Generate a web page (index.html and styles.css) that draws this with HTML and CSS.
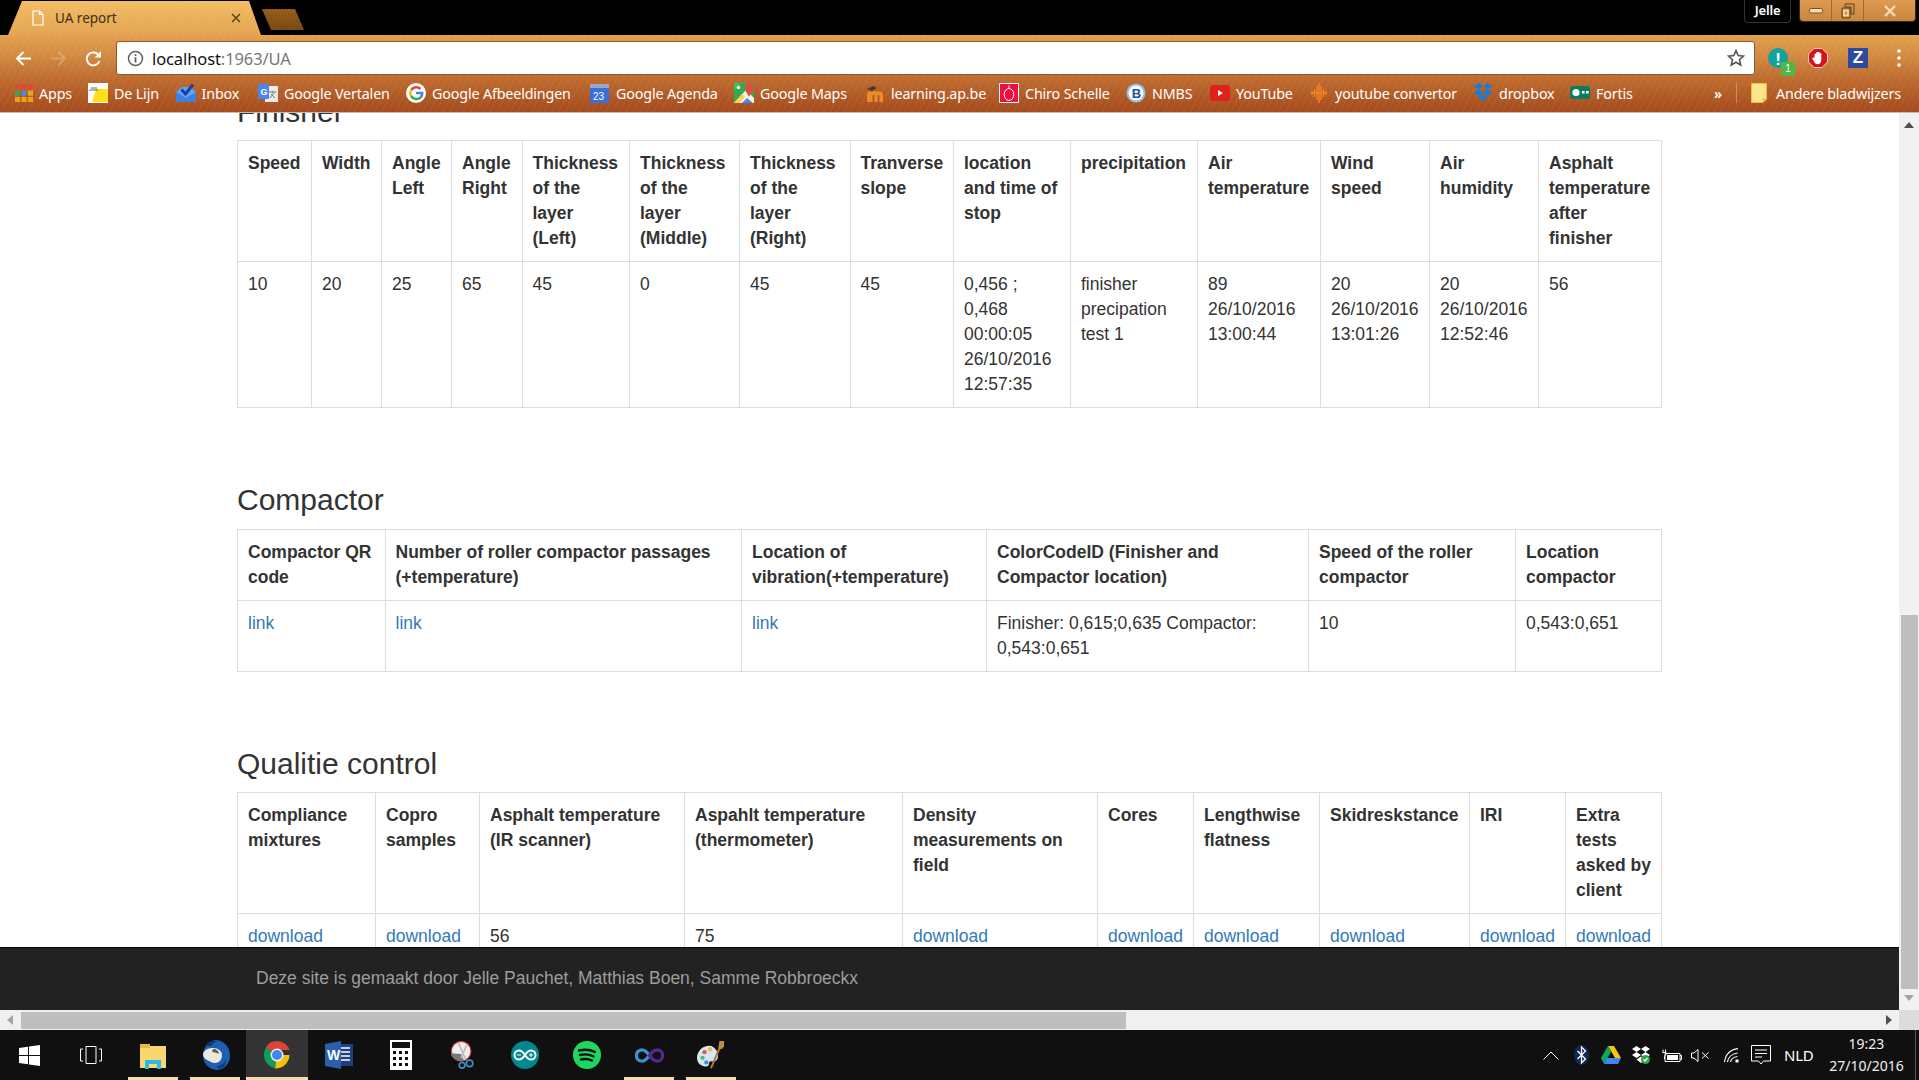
FILE: index.html
```html
<!DOCTYPE html>
<html lang="nl">
<head>
<meta charset="utf-8">
<title>UA report</title>
<link rel="stylesheet" href="styles.css">
</head>
<body>
<header class="browser">
  <div class="tabstrip">
    <div class="tab">
      <svg class="tab-doc" viewBox="0 0 12 16"><path d="M1 1h6.500L11 4.500V15H1z M7.500 1v3.500H11" fill="none" stroke="#fff" stroke-width="1.200"/></svg>
      <span class="tab-title">UA report</span>
      <svg class="tab-x" viewBox="0 0 10 10"><path d="M1 1l8 8M9 1l-8 8" stroke="#4a3a20" stroke-width="1.300"/></svg>
    </div>
    <div class="newtab"></div>
    <div class="profile">Jelle</div>
    <div class="winbtns">
      <div class="winbtn win-min"><svg viewBox="0 0 14 8" class="win-ico"><rect x="0.500" y="1.500" width="13" height="4.500" rx="1.500" fill="#f5dcb4" stroke="#7a5228"/></svg></div>
      <div class="winbtn win-max"><svg viewBox="0 0 14 16" class="win-ico win-ico-tall"><path d="M4 1h9v10h-3V4H4z M1 5h8v10H1z" fill="none" stroke="#5d4020" stroke-width="1"/><path d="M3 7.500h4v5H3z" fill="none" stroke="#f5dcb4" stroke-width="1.600"/></svg></div>
      <div class="winbtn win-close"><svg viewBox="0 0 14 12" class="win-ico"><path d="M2 1l10 10M12 1L2 11" stroke="#f5dcb4" stroke-width="2.400"/></svg></div>
    </div>
  </div>
  <div class="bars">
    <div class="toolbar">
      <svg class="nav" viewBox="0 0 17 17"><path d="M16 8.500H2M8.500 2L2 8.500 8.500 15" fill="none" stroke="#fff" stroke-width="1.800"/></svg>
      <svg class="nav nav-off" viewBox="0 0 17 17"><path d="M1 8.500h14M8.500 2L15 8.500 8.500 15" fill="none" stroke="#fff" stroke-width="1.800"/></svg>
      <svg class="nav" viewBox="0 0 17 17"><path d="M14.500 11a6.500 6.500 0 1 1-.6-5.500" fill="none" stroke="#fff" stroke-width="1.900"/><path d="M16 1v6.500H9.500z" fill="#fff"/></svg>
      <div class="omnibox">
        <svg class="info" viewBox="0 0 17 17"><circle cx="8.500" cy="8.500" r="7" fill="none" stroke="#5f5f5f" stroke-width="1.500"/><path d="M7.600 7.300h1.800v5.200H7.600zM7.600 4.200h1.800V6H7.600z" fill="#5f5f5f"/></svg>
        <span class="url">localhost<span class="url-dim">:1963/UA</span></span>
        <svg class="star" viewBox="0 0 18 18"><path d="M9 1.600l2.200 5 5.300.5-4 3.600 1.200 5.300L9 13.200 4.300 16l1.200-5.300-4-3.600 5.300-.5z" fill="none" stroke="#555" stroke-width="1.600"/></svg>
      </div>
      <div class="exts">
        <div class="ext ext-note"><span class="ext-bang">!</span><span class="ext-badge">1</span></div>
        <svg class="ext" viewBox="0 0 20 20"><path d="M6 .5h8L19.500 6v8L14 19.500H6L.5 14V6z" fill="#d8111c" stroke="#f3d5c8"/><path d="M6.500 10V6.200a.9.9 0 0 1 1.700 0V4.600a.9.9 0 0 1 1.700 0v-.3a.9.9 0 0 1 1.700 0v1.200a.9.9 0 0 1 1.700 0V12c0 2.500-1.500 4.200-3.700 4.200-1.800 0-2.700-1-3.500-2.500L4.400 10.800c-.5-1 .8-1.800 1.500-1z" fill="#fff"/></svg>
        <div class="ext ext-z">Z</div>
        <svg class="dots" viewBox="0 0 4 18"><circle cx="2" cy="2" r="1.800" fill="#fff"/><circle cx="2" cy="9" r="1.800" fill="#fff"/><circle cx="2" cy="16" r="1.800" fill="#fff"/></svg>
      </div>
    </div>
    <nav class="bookmarks">
      <div class="bm-list">
        <a class="bm"><svg class="bm-ico bm-ico-apps" viewBox="2 2 16 16"><g fill="#e2483a"><rect x="2" y="2" width="4.500" height="4.500"/><rect x="7.800" y="2" width="4.500" height="4.500"/><rect x="13.500" y="2" width="4.500" height="4.500"/></g><rect x="2" y="7.800" width="4.500" height="4.500" fill="#3aa757"/><rect x="7.800" y="7.800" width="4.500" height="4.500" fill="#4a8be8"/><rect x="13.500" y="7.800" width="4.500" height="4.500" fill="#e8a81f"/><g fill="#eaa21b"><rect x="2" y="13.500" width="4.500" height="4.500"/><rect x="7.800" y="13.500" width="4.500" height="4.500"/><rect x="13.500" y="13.500" width="4.500" height="4.500"/></g></svg><span>Apps</span></a>
        <a class="bm"><svg class="bm-ico" viewBox="0 0 20 20"><rect width="20" height="20" fill="#fff"/><path d="M8 6h12v13H4z" fill="#ffdf1a"/><path d="M1 7h9M3 5h6" stroke="#666" stroke-width="1"/></svg><span>De Lijn</span></a>
        <a class="bm"><svg class="bm-ico" viewBox="0 0 20 20"><path d="M0 9l6-5h8l6 5v10H0z" fill="#5fa4ee"/><path d="M0 9l10 6 10-6v10H0z" fill="#3f7fe0"/><path d="M5.500 6.500L9.500 11 17 1.500" fill="none" stroke="#1a3f9e" stroke-width="3"/></svg><span>Inbox</span></a>
        <a class="bm"><svg class="bm-ico" viewBox="0 0 20 20"><rect x="7" y="3" width="13" height="16" fill="#e9e9e9"/><path d="M11 9h7M14.500 8v1.500M12 15l4-5M13 11l4 4" stroke="#777" stroke-width="1"/><rect x="0" y="1" width="11" height="15" rx="1" fill="#4a85ee"/><text class="svg-g" x="2.500" y="11.500">G</text></svg><span>Google Vertalen</span></a>
        <a class="bm"><svg class="bm-ico" viewBox="0 0 20 20"><circle cx="10" cy="10" r="10" fill="#fff"/><path d="M14.500 6a6.200 6.200 0 0 0-9.400 1" fill="none" stroke="#ea4335" stroke-width="2.500"/><path d="M5.100 7a6.200 6.200 0 0 0 0 6" fill="none" stroke="#fbbc05" stroke-width="2.500"/><path d="M5.100 13a6.200 6.200 0 0 0 9.800 1.200" fill="none" stroke="#34a853" stroke-width="2.500"/><path d="M14.900 14.200A6.200 6.200 0 0 0 16.200 10H10" fill="none" stroke="#4285f4" stroke-width="2.500"/></svg><span>Google Afbeeldingen</span></a>
        <a class="bm"><svg class="bm-ico" viewBox="0 0 20 20"><rect y="1" width="19" height="19" fill="#3b6fd8"/><rect y="1" width="19" height="4" fill="#9aa8c4"/><text class="svg-cal" x="3" y="16.500">23</text></svg><span>Google Agenda</span></a>
        <a class="bm"><svg class="bm-ico" viewBox="0 0 20 20"><rect width="20" height="20" fill="#35a853"/><path d="M0 20L12 7l8 8v5z" fill="#f5f3ec"/><path d="M0 20l8-9 3 3-6 6z" fill="#fbd34a"/><path d="M8 20l5-5 6 5z" fill="#4a86ea"/><path d="M0 0h6v6H0z" fill="#3ac06a"/><path d="M15 0a5 5 0 0 1 5 5c0 3-3 5-5 9-2-4-4-6-4-9a5 5 0 0 1 4-5z" fill="#e14b3c"/><circle cx="4.500" cy="4.500" r="1.800" fill="#dff3e0"/></svg><span>Google Maps</span></a>
        <a class="bm"><svg class="bm-ico" viewBox="0 0 20 20"><path d="M2 19v-8a3 3 0 0 1 5-2 3 3 0 0 1 4 0c2-1.500 7-1 7 3v7h-3.500v-7h-2v7h-3v-7h-2v7z" fill="#ee8b24"/><path d="M2 6l6-3 4 2-5 3z" fill="#3d3a38"/></svg><span>learning.ap.be</span></a>
        <a class="bm"><svg class="bm-ico" viewBox="0 0 20 20"><rect width="20" height="20" fill="#ed0f42"/><path d="M.5.500h19v19H.5z" fill="none" stroke="#fff"/><ellipse cx="10" cy="11.500" rx="4.800" ry="6" fill="none" stroke="#fff" stroke-width="1"/><path d="M10 5V2.500" stroke="#fff"/></svg><span>Chiro Schelle</span></a>
        <a class="bm"><svg class="bm-ico" viewBox="0 0 20 20"><circle cx="10" cy="10" r="9.500" fill="#8fc0ea"/><circle cx="10" cy="10" r="7.500" fill="#fff"/><text class="svg-b" x="5.800" y="15">B</text></svg><span>NMBS</span></a>
        <a class="bm"><svg class="bm-ico" viewBox="0 0 20 20"><rect y="2" width="20" height="16" rx="3" fill="#e0201c"/><path d="M8 7l5 3-5 3z" fill="#fff"/></svg><span>YouTube</span></a>
        <a class="bm"><svg class="bm-ico bm-ico-wave" viewBox="0 0 16 20"><path d="M1 8v4M3.500 6v8M6 3v14M8 0v20M10 3v14M12.500 6v8M15 8v4M0 10h16" stroke="#ee8322" stroke-width="1.500"/></svg><span>youtube convertor</span></a>
        <a class="bm"><svg class="bm-ico" viewBox="0 0 20 20"><g fill="#0a7fe8"><path d="M5.500 0L10 3.300 5.500 6.500 1 3.300z"/><path d="M14.500 0L19 3.300l-4.500 3.200L10 3.300z"/><path d="M5.500 6.500L10 9.800 5.500 13 1 9.800z"/><path d="M14.500 6.500L19 9.800 14.500 13 10 9.800z"/><path d="M10 11.500l4.500 3.300L10 18l-4.500-3.200z"/></g></svg><span>dropbox</span></a>
        <a class="bm"><svg class="bm-ico" viewBox="0 0 20 20"><rect y="3" width="20" height="13" rx="2.500" fill="#0d7a62"/><circle cx="6" cy="9.500" r="3.600" fill="#fff"/><rect x="12" y="8" width="2.600" height="2.600" fill="#fff"/><rect x="16" y="8" width="2.600" height="2.600" fill="#fff"/></svg><span>Fortis</span></a>
      </div>
      <div class="bm-right">
        <span class="bm-more">»</span>
        <span class="bm-sep"></span>
        <a class="bm bm-other"><svg class="bm-ico bm-ico-folder" viewBox="0 0 16 20"><path d="M.5.500h15v15.500L12 19.500H.5z" fill="#fde68a" stroke="#e8c04a"/><path d="M15 15h-3.500v4" fill="#e8c04a"/></svg><span>Andere bladwijzers</span></a>
      </div>
    </nav>
  </div>
</header>

<div class="window">
  <main class="page">
    <div class="sheet">
      <section class="block">
        <h3>Finisher</h3>
        <table class="grid t-finisher">
          <colgroup><col><col><col><col><col><col><col><col><col><col><col><col><col><col></colgroup>
          <thead><tr><th>Speed</th><th>Width</th><th>Angle Left</th><th>Angle Right</th><th>Thickness of the layer (Left)</th><th>Thickness of the layer (Middle)</th><th>Thickness of the layer (Right)</th><th>Tranverse slope</th><th>location and time of stop</th><th>precipitation</th><th>Air temperature</th><th>Wind speed</th><th>Air humidity</th><th>Asphalt temperature after finisher</th></tr></thead>
          <tbody><tr><td>10</td><td>20</td><td>25</td><td>65</td><td>45</td><td>0</td><td>45</td><td>45</td><td>0,456 ; 0,468 00:00:05 26/10/2016 12:57:35</td><td>finisher precipation test 1</td><td>89 26/10/2016 13:00:44</td><td>20 26/10/2016 13:01:26</td><td>20 26/10/2016 12:52:46</td><td>56</td></tr></tbody>
        </table>
      </section>
      <section class="block block-compactor">
        <h3>Compactor</h3>
        <table class="grid t-compactor">
          <colgroup><col><col><col><col><col><col></colgroup>
          <thead><tr><th>Compactor QR code</th><th>Number of roller compactor passages (+temperature)</th><th>Location of vibration(+temperature)</th><th>ColorCodeID (Finisher and Compactor location)</th><th>Speed of the roller compactor</th><th>Location compactor</th></tr></thead>
          <tbody><tr><td><a href="#">link</a></td><td><a href="#">link</a></td><td><a href="#">link</a></td><td>Finisher: 0,615;0,635 Compactor: 0,543:0,651</td><td>10</td><td>0,543:0,651</td></tr></tbody>
        </table>
      </section>
      <section class="block block-quality">
        <h3>Qualitie control</h3>
        <table class="grid t-quality">
          <colgroup><col><col><col><col><col><col><col><col><col><col></colgroup>
          <thead><tr><th>Compliance mixtures</th><th>Copro samples</th><th>Asphalt temperature (IR scanner)</th><th>Aspahlt temperature (thermometer)</th><th>Density measurements on field</th><th>Cores</th><th>Lengthwise flatness</th><th>Skidreskstance</th><th>IRI</th><th>Extra tests asked by client</th></tr></thead>
          <tbody><tr><td><a href="#">download</a></td><td><a href="#">download</a></td><td>56</td><td>75</td><td><a href="#">download</a></td><td><a href="#">download</a></td><td><a href="#">download</a></td><td><a href="#">download</a></td><td><a href="#">download</a></td><td><a href="#">download</a></td></tr></tbody>
        </table>
      </section>
    </div>
  </main>
  <footer class="site-footer">Deze site is gemaakt door Jelle Pauchet, Matthias Boen, Samme Robbroeckx</footer>
  <div class="vscroll">
    <span class="arrow arrow-up"></span>
    <span class="vthumb"></span>
    <span class="arrow arrow-down"></span>
  </div>
  <div class="hscroll">
    <span class="harrow harrow-left"></span>
    <span class="hthumb"></span>
    <span class="harrow harrow-right"></span>
  </div>
  <div class="corner"></div>
</div>

<div class="taskbar">
  <div class="task task-first">
    <svg class="task-ico task-win" viewBox="0 0 21 21"><path d="M0 3l9-1.300V10H0zM10 1.500L21 0v10H10zM0 11h9v8.300L0 18zM10 11h11v10l-11-1.500z" fill="#fff"/></svg>
  </div>
  <div class="task">
    <svg class="task-ico task-view" viewBox="0 0 24 18"><path d="M7 .5h10v17H7zM4 3H1.500v12H4M20 3h2.500v12H20" fill="none" stroke="#fff" stroke-width="1"/></svg>
  </div>
  <div class="task task-on">
    <svg class="task-ico" viewBox="0 0 28 28"><path d="M1 3h8l2 2h16v22H1z" fill="#f9d76f"/><path d="M1 3h10v4H1z" fill="#e8b93f"/><path d="M6 28v-9h16v9h-4v-5h-8v5z" fill="#2db8ec"/></svg>
  </div>
  <div class="task task-on">
    <svg class="task-ico task-bird" viewBox="0 0 29 30"><path d="M14 0c8 0 15 6 15 16 0 7-5 13-12 14-8 0-15-6-15-14C2 8 7 1 14 0z" fill="#1d5fb0"/><path d="M4 6c3-4 7-6 12-5-3 1-5 3-6 5z" fill="#0d3570"/><path d="M2 14c1-4 5-6 10-6 5 0 9 3 9 7 0 5-3 8-7 8-3 0-5-2-8-3-2-1-4-3-4-6z" fill="#ece7df"/><path d="M12 9c3 0 6 2 6 5-2-1-4-2-7-2z" fill="#5a5a5a"/><path d="M16 26c4 0 8-3 9-7 1 5-3 10-8 10z" fill="#0d3f82"/></svg>
  </div>
  <div class="task task-on task-active">
    <svg class="task-ico" viewBox="0 0 28 28"><path d="M14 14L3 6.500A13 13 0 0 1 26.500 9H14z" fill="#db4437"/><path d="M14 14l-11-7.500A14 14 0 0 0 12 27.500z" fill="#0f9d58"/><path d="M14 14h12.500A14 14 0 0 1 12 27.500z" fill="#f4c20d"/><circle cx="14" cy="14" r="6.500" fill="#f1f1f1"/><circle cx="14" cy="14" r="5" fill="#4285f4"/></svg>
  </div>
  <div class="task">
    <svg class="task-ico" viewBox="0 0 28 28"><path d="M10 3h18v22H10z" fill="#1f3f7e"/><path d="M14 7h11M14 11h11M14 15h11M14 19h11" stroke="#fff" stroke-width="1.500"/><path d="M0 3l16-3v28L0 25z" fill="#2b5fad"/><text class="svg-w" x="2" y="19">W</text></svg>
  </div>
  <div class="task">
    <svg class="task-ico task-calc" viewBox="0 0 22 30"><rect width="22" height="30" fill="#fff"/><rect x="2" y="2" width="18" height="6" fill="#111"/><g fill="#111"><path d="M3 11h3v3H3zM9 11h3v3H9zM15 11h3v3h-3zM3 17h3v3H3zM9 17h3v3H9zM15 17h3v3h-3zM3 23h3v3H3zM9 23h3v3H9zM15 23h3v3h-3z"/></g></svg>
  </div>
  <div class="task">
    <svg class="task-ico" viewBox="0 0 28 30"><circle cx="12" cy="11" r="10.500" fill="#eee" stroke="#c93a3a" stroke-width="1.200"/><path d="M1 13a11 9 0 0 0 14 8l-3-7z" fill="#777"/><path d="M9 2l8 18M18 4l-6 14" stroke="#bdbdbd" stroke-width="1.800"/><circle cx="21" cy="24" r="3.500" fill="none" stroke="#3c8fc9" stroke-width="1.800"/><circle cx="13" cy="26" r="3" fill="none" stroke="#3c8fc9" stroke-width="1.800"/></svg>
  </div>
  <div class="task">
    <svg class="task-ico" viewBox="0 0 28 28"><circle cx="14" cy="14" r="14" fill="#00878f"/><path d="M14 14c-2-3-3.500-4.500-6-4.500a4.500 4.500 0 0 0 0 9c2.500 0 4-1.500 6-4.500zm0 0c2-3 3.500-4.500 6-4.500a4.500 4.500 0 0 1 0 9c-2.500 0-4-1.500-6-4.500z" fill="none" stroke="#fff" stroke-width="2"/><path d="M6 14h4M18 14h4M20 12v4" stroke="#fff" stroke-width="1"/></svg>
  </div>
  <div class="task">
    <svg class="task-ico" viewBox="0 0 28 28"><circle cx="14" cy="14" r="14" fill="#1ed760"/><path d="M6 9.500c6-1.500 11-1 16 1.500M7 14c5-1.200 9-.8 13.500 1.300M8 18.500c4-1 7.500-.6 11 1" fill="none" stroke="#111" stroke-width="2.400" stroke-linecap="round"/></svg>
  </div>
  <div class="task task-on">
    <svg class="task-ico task-vs" viewBox="0 0 30 16"><path d="M15 8C12 4 10 2 7 2a6 6 0 0 0 0 12c3 0 5-2 8-6z" fill="none" stroke="#3e8fcb" stroke-width="3.600"/><path d="M15 8c3-4 5-6 8-6a6 6 0 0 1 0 12c-3 0-5-2-8-6z" fill="none" stroke="#4f2a8f" stroke-width="3.600"/></svg>
  </div>
  <div class="task task-on">
    <svg class="task-ico" viewBox="0 0 30 30"><path d="M13 5C6 5 0 11 0 18s6 10 11 9c3-1 1-4 3-5s6 1 8-3c2-5-2-14-9-14z" fill="#d7e5ef"/><circle cx="8" cy="12" r="2.300" fill="#e2574c"/><circle cx="14" cy="9" r="2.300" fill="#efb93a"/><circle cx="6" cy="18" r="2.300" fill="#5ab56e"/><circle cx="10" cy="23" r="2.300" fill="#3d8fe0"/><path d="M27 1L15 29" stroke="#b5773a" stroke-width="2.200"/><path d="M24 0h5v6l-3 3-3-2z" fill="#c08a4a"/></svg>
  </div>
  <div class="tray">
    <svg class="tray-chev" viewBox="0 0 16 9"><path d="M.5 8.500L8 1l7.500 7.500" fill="none" stroke="#fff" stroke-width="1"/></svg>
    <svg class="tray-bt" viewBox="0 0 15 20"><ellipse cx="7.500" cy="10" rx="7.500" ry="10" fill="#0b2a55"/><path d="M3.500 6l8 8L7.500 18V2l4 4-8 8" fill="none" stroke="#fff" stroke-width="1.300"/></svg>
    <svg class="tray-drive" viewBox="0 0 20 18"><path d="M7 0h6l7 12h-6z" fill="#f5c518"/><path d="M7 0L0 12l3 6L10 6z" fill="#0da960"/><path d="M6 12h14l-3 6H3z" fill="#4285f4"/></svg>
    <svg class="tray-box" viewBox="0 0 19 18"><g fill="#fff"><path d="M4.500 0L9 3 4.500 6 0 3zM13.500 0L18 3l-4.500 3L9 3zM4.500 6L9 9l-4.500 3L0 9zM13.500 6L18 9l-4.500 3L9 9zM9 10.500l4.500 3L9 17l-4.500-3.500z"/></g><circle cx="13.500" cy="13.500" r="4.500" fill="#2ea64a"/><path d="M11.500 13.500l1.500 1.500 2.500-3" fill="none" stroke="#fff" stroke-width="1.200"/></svg>
    <svg class="tray-batt" viewBox="0 0 20 13"><path d="M3 4.500h15v8H3zM18 6.500h1.500v4H18" fill="none" stroke="#fff"/><rect x="5" y="6" width="11" height="5" fill="#fff"/><path d="M1 .5v3M3.500.5v3M.5 3.500h3.500v2L2.500 7.500V10" fill="none" stroke="#fff"/></svg>
    <svg class="tray-spk" viewBox="0 0 19 13"><path d="M.5 4h2.500L7 .5v12L3 9H.5zM11 3.500l6.500 6M17.500 3.500l-6.500 6" fill="none" stroke="#fff" stroke-width="1"/></svg>
    <svg class="tray-wifi" viewBox="0 0 15 15"><path d="M.5 14C1 7 6 1.500 14 .7M3.500 14c.5-4 4-8 10-9M6.500 14c.5-2.500 3-5 7-5.500" fill="none" stroke="#fff" stroke-width="1.200"/><rect x="11.500" y="11.500" width="3" height="3" fill="#fff"/></svg>
    <svg class="tray-note" viewBox="0 0 20 20"><path d="M.5.500h19v15.500h-7L10 19l-2.500-3H.5z" fill="none" stroke="#fff"/><path d="M4 5h12M4 8.500h12M4 12h7" stroke="#fff"/></svg>
    <span class="tray-lang">NLD</span>
    <div class="clock"><span>19:23</span><span>27/10/2016</span></div>
    <span class="desktop-edge"></span>
  </div>
</div>
</body>
</html>
```

FILE: styles.css
```css
* { box-sizing: border-box; }
html, body { margin: 0; height: 100%; }
body {
  display: flex;
  flex-direction: column;
  height: 1080px;
  overflow: hidden;
  background: #fff;
  font-family: "Liberation Sans", Arial, sans-serif;
  color: #333;
}

/* browser chrome */
.browser { flex: none; font-family: "Noto Sans", sans-serif; }
.tabstrip { display: flex; height: 35px; background: #000; position: relative; }
.tab {
  width: 253px; height: 34px; margin: 1px 0 0 8px; flex: none;
  display: flex; align-items: center; padding: 0 20px 0 24px;
  clip-path: polygon(14px 0, 241px 0, 253px 100%, 0 100%);
  background: repeating-linear-gradient(115deg, rgba(255,255,255,.04) 0 2px, transparent 2px 5px), linear-gradient(#f3bc62, #e3a350);
}
.tab-doc { width: 12px; height: 16px; flex: none; }
.tab-title { font-size: 13.500px; color: #3b2f1c; margin-left: 11px; flex: 1; }
.tab-x { width: 10px; height: 10px; flex: none; }
.newtab {
  width: 42px; height: 21px; margin: 9px 0 0 1px; flex: none;
  clip-path: polygon(0 0, 33px 0, 42px 100%, 9px 100%);
  background: repeating-linear-gradient(70deg, rgba(60,30,0,.14) 0 1px, transparent 1px 3px), linear-gradient(#9a621c, #7a4c14);
}
.profile {
  margin-left: auto; width: 47px; height: 23px; flex: none;
  border: 1px solid #333; border-top: 0; border-radius: 0 0 4px 4px;
  color: #fff; font-size: 13px; font-weight: 600; text-align: center; line-height: 20px;
  letter-spacing: -.2px;
}
.winbtns { display: flex; margin: 0 3px 0 8px; height: 22px; border-radius: 0 0 4px 4px; overflow: hidden; border: 1px solid #3a2a14; border-top: 0; }
.winbtn { display: flex; align-items: center; justify-content: center; background: linear-gradient(#dd9a50, #c98640); border-left: 1px solid #a06a30; }
.win-min { width: 31px; border-left: 0; }
.win-max { width: 32px; }
.win-close { width: 52px; }
.win-ico { width: 14px; height: 12px; }
.win-ico-tall { height: 16px; }

.bars {
  background:
    repeating-linear-gradient(118deg, rgba(255,255,255,.035) 0 2px, transparent 2px 6px),
    linear-gradient(#e4a04e 0, #cf8740 30%, #bf6c30 55%, #a4491c 100%);
}
.toolbar { display: flex; align-items: center; height: 40px; padding: 6px 0 0 15px; gap: 18px; }
.nav { width: 17px; height: 17px; flex: none; }
.nav-off { opacity: .22; }
.omnibox {
  flex: 1; height: 34px; margin-left: -4px; display: flex; align-items: center;
  background: #fff; border: 1px solid #8a5a2a; border-radius: 3px; padding: 0 9px 0 10px;
}
.info { width: 17px; height: 17px; flex: none; }
.url { font-size: 16.500px; color: #111; margin-left: 8px; flex: 1; letter-spacing: -.1px; padding-top: 1px; }
.url-dim { color: #777; }
.star { width: 18px; height: 18px; flex: none; }
.exts { display: flex; align-items: center; width: 164px; flex: none; margin-left: -18px; padding-left: 13px; gap: 20px; }
.ext { width: 20px; height: 20px; flex: none; position: relative; }
.ext-note { background: #12a39c; border-radius: 50%; color: #fff; text-align: center; }
.ext-bang { font: 700 17px/20px "Liberation Sans", sans-serif; }
.ext-badge {
  position: absolute; left: 13px; top: 14px; width: 14px; height: 14px;
  background: #4cb848; color: #fff; font: 10px/14px "Liberation Sans", sans-serif;
}
.ext-z { background: #2e4a9e; color: #fff; text-align: center; font: 700 17px/20px "Liberation Sans", sans-serif; }
.dots { width: 4px; height: 18px; margin-left: 9px; flex: none; }

.bookmarks { display: flex; align-items: center; height: 38px; padding: 0 18px 1px 15px; border-bottom: 1px solid #bdbdbd; }
.bm-list { display: grid; grid-template-columns: 73px 87.500px 82.500px 148px 184px 144px 131px 134px 127px 84px 101px 162px 97px 100px; }
.bm { display: flex; align-items: center; gap: 6px; color: #fff; font-size: 14.300px; white-space: nowrap; letter-spacing: -.15px; }
.bm-ico { width: 20px; height: 20px; flex: none; }
.bm-ico-apps { width: 18px; height: 18px; }
.bm-ico-wave { width: 16px; margin-right: 2px; }
.bm-ico-folder { width: 16px; margin-right: 3px; }
.bm-right { margin-left: auto; display: flex; align-items: center; }
.bm-more { color: #fff; font-size: 14px; font-weight: 600; width: 22px; }
.bm-sep { width: 1px; height: 20px; background: rgba(255,255,255,.3); margin-right: 14px; }

/* page viewport */
.window { flex: 1; min-height: 0; display: grid; grid-template-columns: 1fr 20px; grid-template-rows: 1fr 63px 20px; }
.page { grid-column: 1; grid-row: 1; overflow: hidden; background: #fff; min-height: 0; }
.sheet { width: 1425px; margin: -18px auto 0; }
h3 { font-size: 30px; font-weight: 500; line-height: 33px; margin: 0 0 12px; color: #333; }
.block-compactor { margin-top: 75px; }
.block-compactor h3 { margin-bottom: 13px; }
.block-quality { margin-top: 75px; }
.grid { width: 1424px; table-layout: fixed; border-collapse: collapse; font-size: 17.500px; line-height: 25px; }
.grid th, .grid td { border: 1px solid #ddd; padding: 10px; text-align: left; vertical-align: top; }
.grid th { font-weight: 700; }
.grid a { color: #337ab7; text-decoration: none; }

.t-finisher col:nth-child(1) { width: 74px; }
.t-finisher col:nth-child(2) { width: 70px; }
.t-finisher col:nth-child(3) { width: 70px; }
.t-finisher col:nth-child(4) { width: 70.500px; }
.t-finisher col:nth-child(5) { width: 107.500px; }
.t-finisher col:nth-child(6) { width: 110px; }
.t-finisher col:nth-child(7) { width: 110.500px; }
.t-finisher col:nth-child(8) { width: 103.500px; }
.t-finisher col:nth-child(9) { width: 117px; }
.t-finisher col:nth-child(10) { width: 127px; }
.t-finisher col:nth-child(11) { width: 123px; }
.t-finisher col:nth-child(12) { width: 109px; }
.t-finisher col:nth-child(13) { width: 109px; }
.t-finisher col:nth-child(14) { width: 123px; }

.t-compactor col:nth-child(1) { width: 147.500px; }
.t-compactor col:nth-child(2) { width: 356.500px; }
.t-compactor col:nth-child(3) { width: 245px; }
.t-compactor col:nth-child(4) { width: 322px; }
.t-compactor col:nth-child(5) { width: 207px; }
.t-compactor col:nth-child(6) { width: 146px; }

.t-quality col:nth-child(1) { width: 138px; }
.t-quality col:nth-child(2) { width: 104px; }
.t-quality col:nth-child(3) { width: 205px; }
.t-quality col:nth-child(4) { width: 218px; }
.t-quality col:nth-child(5) { width: 195px; }
.t-quality col:nth-child(6) { width: 96px; }
.t-quality col:nth-child(7) { width: 126px; }
.t-quality col:nth-child(8) { width: 150px; }
.t-quality col:nth-child(9) { width: 96px; }
.t-quality col:nth-child(10) { width: 96px; }

.site-footer {
  grid-column: 1; grid-row: 2; background: #222; border-top: 1px solid #080808;
  color: #9d9d9d; font-size: 17.500px; line-height: 60px; padding-left: 256px;
}
.vscroll { grid-column: 2; grid-row: 1 / span 2; background: #f1f1f1; display: flex; flex-direction: column; align-items: center; position: relative; }
.arrow { width: 0; height: 0; border-left: 5px solid transparent; border-right: 5px solid transparent; flex: none; }
.arrow-up { border-bottom: 6px solid #505050; margin-top: 9px; }
.vthumb { width: 17px; height: 374px; background: #bebebe; margin-top: auto; }
.arrow-down { border-top: 6px solid #a3a3a3; margin: 6px 0 9px; }
.hscroll { grid-column: 1; grid-row: 3; background: #f0f0f0; display: flex; align-items: center; }
.harrow { width: 0; height: 0; border-top: 5px solid transparent; border-bottom: 5px solid transparent; flex: none; }
.harrow-left { border-right: 6px solid #a3a3a3; margin-left: 7px; }
.hthumb { width: 1105px; height: 17px; background: #bebebe; margin-left: 8px; }
.harrow-right { border-left: 6px solid #505050; margin-left: auto; margin-right: 7px; }
.corner { grid-column: 2; grid-row: 3; background: #dcdcdc; }

/* taskbar */
.taskbar { flex: none; height: 50px; background: #101010; display: flex; font-family: "Noto Sans", sans-serif; color: #fff; }
.task { width: 62px; height: 50px; flex: none; display: flex; align-items: center; justify-content: center; position: relative; }
.task-first { margin-left: -2px; }
.task-on::after { content: ""; position: absolute; left: 6px; right: 6px; bottom: 0; height: 3px; background: #fcd9ae; }
.task-active { background: #333; }
.task-active::after { left: 0; right: 0; }
.task-ico { width: 28px; height: 28px; }
.task-win { width: 21px; height: 21px; }
.task-view { width: 24px; height: 18px; }
.task-bird { width: 29px; height: 30px; }
.task-calc { width: 22px; height: 30px; }
.task-vs { width: 29px; height: 15px; }
.tray { margin-left: auto; display: flex; align-items: center; height: 50px; position: relative; }
.tray svg { flex: none; }
.tray-chev { width: 16px; height: 9px; margin-right: 15px; }
.tray-bt { width: 15px; height: 20px; margin-right: 12px; }
.tray-drive { width: 20px; height: 18px; margin-right: 11px; }
.tray-box { width: 19px; height: 18px; margin-right: 11px; }
.tray-batt { width: 20px; height: 13px; margin-right: 9px; }
.tray-spk { width: 19px; height: 13px; margin-right: 14px; }
.tray-wifi { width: 15px; height: 15px; margin-right: 12px; }
.tray-note { width: 20px; height: 20px; margin-right: 13px; }
.tray-lang { font-size: 15px; width: 29px; margin-right: 15px; white-space: nowrap; letter-spacing: -.2px; }
.clock { display: flex; flex-direction: column; align-items: center; width: 77px; margin-right: 14px; font-size: 14px; line-height: 22px; color: #f0f0f0; }
.desktop-edge { position: absolute; right: 3px; top: 0; bottom: 0; width: 1px; background: #555; }

/* svg text */
.svg-g { font: 700 9px "Liberation Sans", sans-serif; fill: #fff; }
.svg-cal { font: 10px "Liberation Sans", sans-serif; fill: #fff; }
.svg-b { font: 700 13px "Liberation Sans", sans-serif; fill: #1b4ea0; }
.svg-w { font: 700 14px "Liberation Sans", sans-serif; fill: #fff; }
```
